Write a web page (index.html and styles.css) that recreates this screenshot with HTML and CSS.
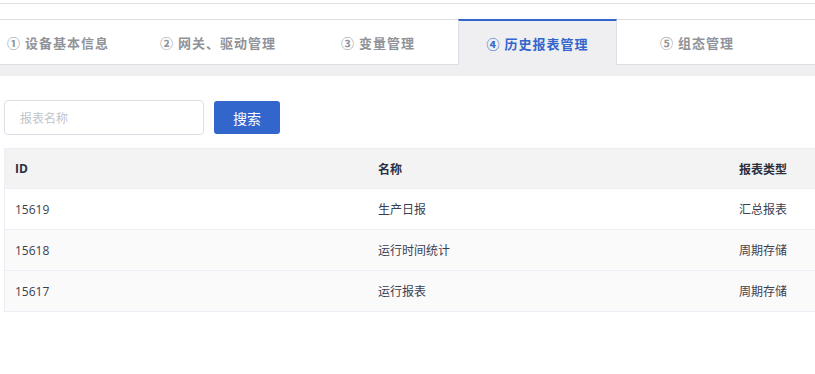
FILE: index.html
```html
<!DOCTYPE html>
<html lang="zh">
<head>
<meta charset="utf-8">
<link rel="stylesheet" href="styles.css">
</head>
<body>
<div class="topbar"></div>
<div class="gap"></div>
<div class="tabs">
  <div class="tab first">① 设备基本信息</div>
  <div class="tab">② 网关、驱动管理</div>
  <div class="tab">③ 变量管理</div>
  <div class="tab active">④ 历史报表管理</div>
  <div class="tab">⑤ 组态管理</div>
</div>
<div class="band"></div>
<div class="content">
  <div class="search">
    <input class="search-input" type="text" placeholder="报表名称">
    <button class="btn">搜索</button>
  </div>
  <div class="table">
    <div class="row head">
      <div class="cell">ID</div>
      <div class="cell">名称</div>
      <div class="cell">报表类型</div>
    </div>
    <div class="row">
      <div class="cell">15619</div>
      <div class="cell">生产日报</div>
      <div class="cell">汇总报表</div>
    </div>
    <div class="row alt">
      <div class="cell">15618</div>
      <div class="cell">运行时间统计</div>
      <div class="cell">周期存储</div>
    </div>
    <div class="row alt">
      <div class="cell">15617</div>
      <div class="cell">运行报表</div>
      <div class="cell">周期存储</div>
    </div>
  </div>
</div>
</body>
</html>
```
FILE: styles.css
```css
* { box-sizing: border-box; }
html, body { margin: 0; padding: 0; background: #fff; }
body {
  width: 815px;
  height: 374px;
  overflow: hidden;
  font-family: "Open Sans", "Noto Sans CJK SC", sans-serif;
  color: #333;
}
.topbar { height: 4px; border-bottom: 1px solid #e1e1e4; }
.gap { height: 15px; }
.tabs {
  display: flex;
  height: 46px;
  border-top: 1px solid #dcdfe6;
  border-bottom: 1px solid #dcdfe6;
}
.tab {
  flex: 0 0 160px;
  height: 44px;
  display: flex;
  align-items: center;
  justify-content: center;
  font-family: "Noto Sans CJK SC", sans-serif;
  font-size: 13px;
  font-weight: 700;
  letter-spacing: 1px;
  color: #909399;
}
.tab.first {
  flex: 0 0 138px;
  justify-content: flex-end;
  padding-right: 29px;
}
.tab.active {
  flex: 0 0 159px;
  margin-top: -1px;
  height: 46px;
  border-top: 2px solid #3366cc;
  border-left: 1px solid #dcdfe6;
  border-right: 1px solid #dcdfe6;
  background: #efeff1;
  color: #3366cc;
  padding-top: 1px;
}
.band { height: 11px; background: #efeff1; }
.content { padding: 24px 0 0 4px; }
.search { display: flex; align-items: center; gap: 10px; height: 35px; }
.search-input {
  width: 200px;
  height: 35px;
  border: 1px solid #dcdfe6;
  border-radius: 4px;
  padding: 0 15px;
  font-family: "Noto Sans CJK SC", sans-serif;
  font-size: 12px;
  outline: none;
}
.search-input::placeholder { color: #c0c4cc; }
.btn {
  width: 66px;
  height: 33px;
  border: none;
  border-radius: 3px;
  background: #3366cc;
  color: #fff;
  font-family: "Noto Sans CJK SC", sans-serif;
  font-size: 14px;
  padding: 0;
}
.table {
  margin-top: 13px;
  width: 811px;
  border: 1px solid #ebeef5;
  border-right: none;
}
.row {
  display: grid;
  grid-template-columns: 363px 361px 86px;
  height: 41px;
  border-bottom: 1px solid #ebeef5;
  align-items: center;
  background: #fff;
  font-size: 12px;
  color: #3a3f51;
}
.row:last-child { border-bottom: none; height: 40px; }
.row.head { background: #f3f3f4; font-weight: 700; height: 40px; color: #2a2f3f; }
.row.alt { background: #fafafb; }
.cell { padding-left: 10px; white-space: nowrap; font-family: "Open Sans", "Noto Sans CJK SC", sans-serif; }
```
